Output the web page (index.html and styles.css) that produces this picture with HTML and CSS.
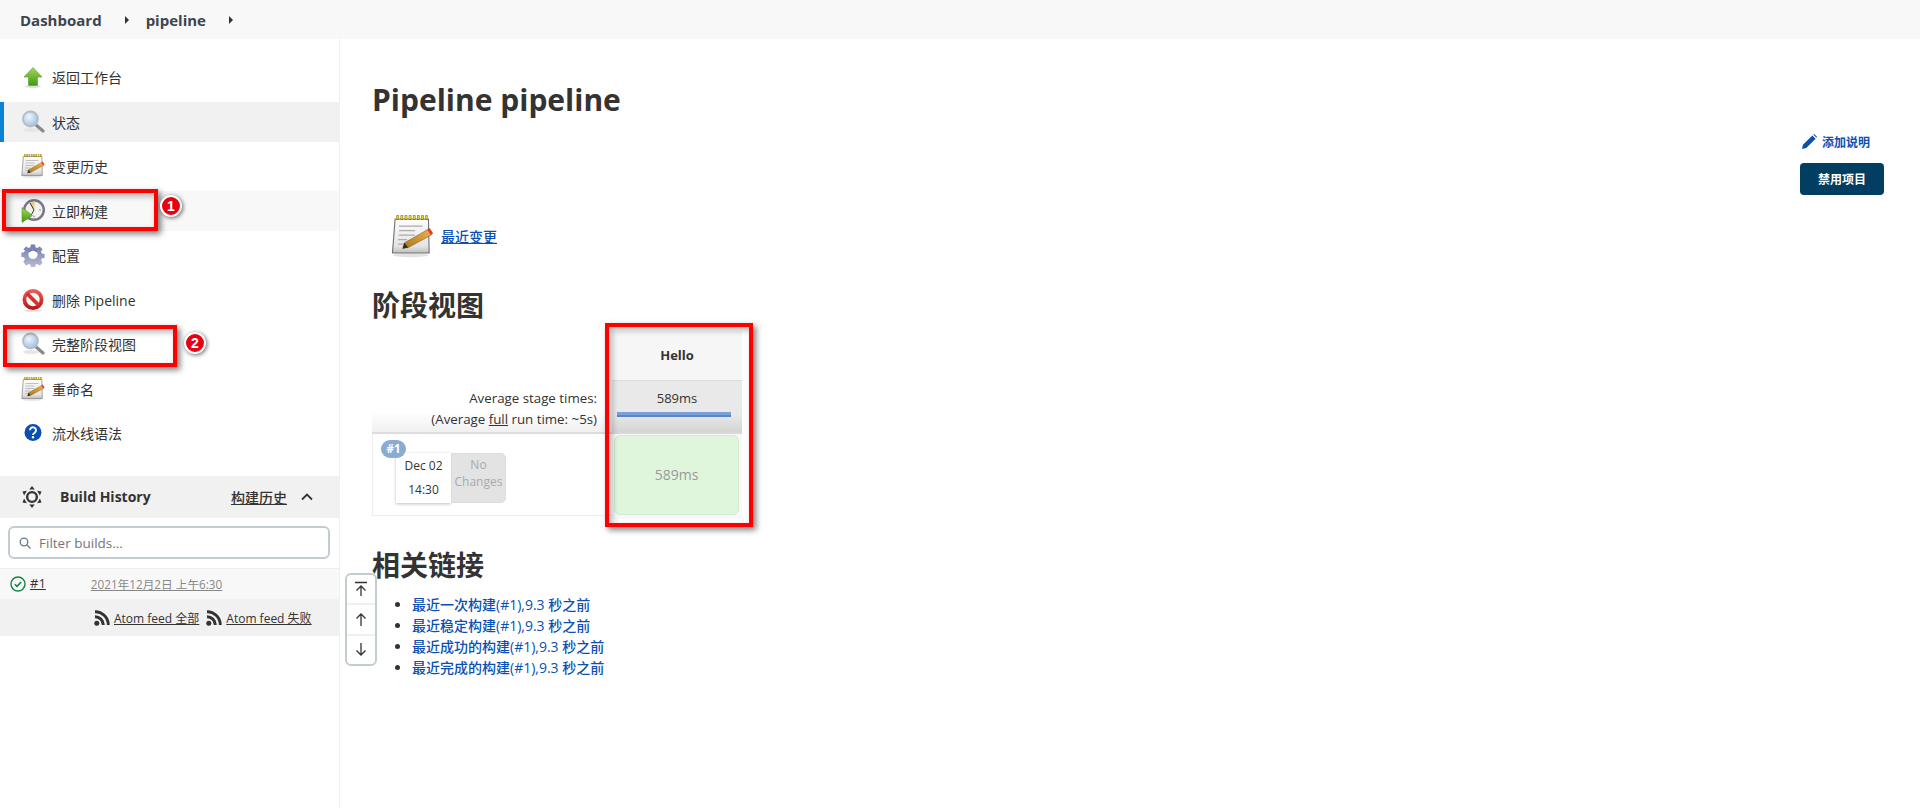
FILE: index.html
```html
<!DOCTYPE html>
<html lang="zh-CN">
<head>
<meta charset="utf-8">
<title>pipeline</title>
<link rel="stylesheet" href="styles.css">
</head>
<body>
<svg class="sprite" aria-hidden="true">
  <defs>
    <linearGradient id="gGreen" x1="0" y1="0" x2="0" y2="1"><stop offset="0" stop-color="#a5d65c"/><stop offset="1" stop-color="#3f9a12"/></linearGradient>
    <radialGradient id="gLens" cx=".4" cy=".35" r=".8"><stop offset="0" stop-color="#eef6fd"/><stop offset="1" stop-color="#8fb4de"/></radialGradient>
    <linearGradient id="gPage" x1="0" y1="0" x2="0" y2="1"><stop offset="0" stop-color="#fdfdfd"/><stop offset=".8" stop-color="#e4e4e4"/><stop offset="1" stop-color="#bdbdbd"/></linearGradient>
    <linearGradient id="gPencil" x1="0" y1="1" x2="1" y2="0"><stop offset="0" stop-color="#a8741c"/><stop offset="1" stop-color="#eeb34c"/></linearGradient>
    <linearGradient id="gGear" x1="0" y1="0" x2="0" y2="1"><stop offset="0" stop-color="#6f7bb0"/><stop offset="1" stop-color="#bdbdd2"/></linearGradient>
    <linearGradient id="gRed" x1="0" y1="0" x2="0" y2="1"><stop offset="0" stop-color="#ea5a56"/><stop offset="1" stop-color="#b81a17"/></linearGradient>
    <symbol id="i-up" viewBox="0 0 24 24">
      <ellipse cx="12" cy="21.500" rx="8" ry="1.500" fill="#ddd"/>
      <path d="M12 2.500 21 12h-4.500v8.500h-9V12H3z" fill="url(#gGreen)" stroke="#5d9c2c" stroke-width=".6"/>
    </symbol>
    <symbol id="i-search" viewBox="0 0 24 24">
      <ellipse cx="10" cy="20" rx="8" ry="2" fill="#e6e6e6"/>
      <path d="m14.500 14.500 7.500 6.500" stroke="#8a8a8a" stroke-width="3.200" stroke-linecap="round"/>
      <circle cx="9.500" cy="9" r="7.500" fill="url(#gLens)" stroke="#b5bcc6" stroke-width="1.800"/>
    </symbol>
    <symbol id="i-note" viewBox="0 0 24 24">
      <ellipse cx="11" cy="22.800" rx="10" ry="1" fill="#e2e2e2"/>
      <path d="M2.300 2.500h18.600l.4 19H.8z" fill="url(#gPage)" stroke="#6e6e6e" stroke-width=".6"/>
      <path d="M3 1.700h17.500" stroke="#8e7a10" stroke-width="2.700" stroke-dasharray="1.500 .8"/>
      <path d="M3.300 1.700h17.500" stroke="#e8cf3a" stroke-width="1.700" stroke-dasharray=".9 1.400"/>
      <path d="M4.500 6.500h13M4.500 9h9M4.300 11.500h9M4 14h5M4 16.500h4" stroke="#ababab" stroke-width=".7"/>
      <path d="m6.500 19 1-3.200L20.500 8.400l2 3.100-12.800 6.900z" fill="url(#gPencil)" stroke="#7d5a18" stroke-width=".3"/>
      <path d="m20.300 8.500 1.300-.9 1.900 3-1.200.9z" fill="#e33"/>
      <path d="m6.500 19 1-3.200 2.100 2.600z" fill="#2c2c2c"/>
    </symbol>
    <symbol id="i-build" viewBox="0 0 24 24">
      <circle cx="13" cy="11" r="9.800" fill="#f3f1ea" stroke="#77748f" stroke-width="2.400"/>
      <path d="M13 11 8.500 3.500 14 2.500z" fill="#e5d283"/>
      <path d="M13 11 9 4M13 11l-2.500 4.500" stroke="#333" stroke-width="1"/>
      <circle cx="19" cy="11" r=".9" fill="#aaa"/>
      <circle cx="13" cy="17.500" r=".9" fill="#aaa"/>
      <path d="M1 8.500 11.500 16.500 1 23.500z" fill="url(#gGreen)" stroke="#3d8a12" stroke-width=".5"/>
    </symbol>
    <symbol id="i-gear" viewBox="0 0 24 24">
      <path d="M9.600 0h4.800l.7 3.400 2.200.9 2.900-1.900 3.400 3.400-1.900 2.900.9 2.200 3.400.7v4.800l-3.400.7-.9 2.200 1.900 2.900-3.400 3.400-2.900-1.900-2.200.9-.7 3.400H9.600l-.7-3.400-2.200-.9-2.900 1.900L.4 20.800l1.900-2.900-.9-2.200-3.400-.7v-4.800l3.400-.7.9-2.200L.4 5.800l3.400-3.400 2.900 1.900 2.200-.9z" transform="translate(2 1.400) scale(.83)" fill="url(#gGear)"/>
      <circle cx="12" cy="11.400" r="4.600" fill="#fff"/>
      <path d="M8.300 9a4.500 4.500 0 0 1 7.400 0" stroke="#5c6590" stroke-width="1.100" fill="none"/>
    </symbol>
    <symbol id="i-no" viewBox="0 0 24 24">
      <ellipse cx="12" cy="22.600" rx="9" ry="1.200" fill="#ddd"/>
      <circle cx="12" cy="11.500" r="8.600" fill="#f6f6f6" stroke="url(#gRed)" stroke-width="3.800"/>
      <path d="m6 5.500 12 12" stroke="#d4322f" stroke-width="3.800"/>
    </symbol>
    <symbol id="i-help" viewBox="0 0 24 24">
      <circle cx="12" cy="11.500" r="8.500" fill="#0b4fb3"/>
      <path d="M9 9.200a3 3 0 1 1 4.700 2.500c-1.100.7-1.700 1.100-1.700 2.300" fill="none" stroke="#fff" stroke-width="1.900"/>
      <circle cx="12" cy="16.300" r="1.200" fill="#fff"/>
    </symbol>
    <symbol id="i-rss" viewBox="0 0 16 16">
      <circle cx="2.800" cy="13.200" r="2.500" fill="#333"/>
      <path d="M1 6.700A8.300 8.300 0 0 1 9.300 15M1 1.700A13.300 13.300 0 0 1 14.300 15" fill="none" stroke="#333" stroke-width="2.900"/>
    </symbol>
  </defs>
</svg>

<nav class="crumbs">
  <a class="crumb">Dashboard</a><span class="caret"></span>
  <a class="crumb">pipeline</a><span class="caret"></span>
</nav>

<div class="page">
  <aside class="side">
    <ul class="tasks">
      <li class="task"><svg class="ti"><use href="#i-up"/></svg>返回工作台</li>
      <li class="task task-active"><svg class="ti"><use href="#i-search"/></svg>状态</li>
      <li class="task"><svg class="ti"><use href="#i-note"/></svg>变更历史</li>
      <li class="task task-hover"><svg class="ti"><use href="#i-build"/></svg>立即构建</li>
      <li class="task"><svg class="ti"><use href="#i-gear"/></svg>配置</li>
      <li class="task"><svg class="ti"><use href="#i-no"/></svg>删除 Pipeline</li>
      <li class="task"><svg class="ti"><use href="#i-search"/></svg>完整阶段视图</li>
      <li class="task"><svg class="ti"><use href="#i-note"/></svg>重命名</li>
      <li class="task"><svg class="ti"><use href="#i-help"/></svg>流水线语法</li>
    </ul>

    <section class="history">
      <header class="hist-head">
        <svg class="hist-icon" viewBox="0 0 24 24">
          <circle cx="12" cy="12" r="5.300" fill="none" stroke="#333" stroke-width="2.600"/>
          <path d="M12 0l3 3.800H9z" fill="#333"/>
          <path d="M12 0l3 3.800H9z" fill="#333" transform="rotate(60 12 12)"/>
          <path d="M12 0l3 3.800H9z" fill="#333" transform="rotate(120 12 12)"/>
          <path d="M12 0l3 3.800H9z" fill="#333" transform="rotate(180 12 12)"/>
          <path d="M12 0l3 3.800H9z" fill="#333" transform="rotate(240 12 12)"/>
          <path d="M12 0l3 3.800H9z" fill="#333" transform="rotate(300 12 12)"/>
        </svg>
        <b class="hist-title">Build History</b>
        <a class="hist-link">构建历史</a>
        <svg class="hist-chev" viewBox="0 0 12 8"><path d="M1 6.500 6 1.500l5 5" fill="none" stroke="#333" stroke-width="1.800"/></svg>
      </header>
      <div class="filter">
        <svg class="filter-icon" viewBox="0 0 12 12"><circle cx="5" cy="5" r="3.800" fill="none" stroke="#5f7d95" stroke-width="1.300"/><path d="m8 8 3.500 3.500" stroke="#5f7d95" stroke-width="1.300"/></svg>
        <span class="filter-text">Filter builds...</span>
      </div>
      <div class="build">
        <svg class="build-ok" viewBox="0 0 16 16"><circle cx="8" cy="8" r="7" fill="none" stroke="#138347" stroke-width="1.400"/><path d="m4.800 8.200 2.200 2.200 4.200-4.400" fill="none" stroke="#138347" stroke-width="1.600"/></svg>
        <a class="build-num">#1</a>
        <a class="build-date">2021年12月2日 上午6:30</a>
      </div>
      <div class="feeds">
        <svg class="rss"><use href="#i-rss"/></svg><a class="feed">Atom feed 全部</a>
        <svg class="rss rss-2"><use href="#i-rss"/></svg><a class="feed">Atom feed 失败</a>
      </div>
    </section>
  </aside>

  <main class="main">
    <h1 class="title">Pipeline pipeline</h1>
    <div class="actions">
      <a class="add-desc">
        <svg class="pen" viewBox="0 0 16 16"><path d="M0 16l1-4.500L11 1.500l3.500 3.500-10 10zM12 .5l1-.5 3 3-.5 1z" fill="#0b4fb3"/></svg>添加说明
      </a>
      <button class="disable">禁用项目</button>
    </div>
    <div class="changes">
      <svg class="note-big"><use href="#i-note"/></svg>
      <a class="link">最近变更</a>
    </div>
    <h2 class="sec sec-stage">阶段视图</h2>

    <div class="stage">
      <div class="st-blank"></div>
      <div class="st-head">Hello</div>
      <div class="st-labels">
        <div>Average stage times:</div>
        <div>(Average <u>full</u> run time: ~5s)</div>
      </div>
      <div class="st-avg">
        <div class="st-avg-t">589ms</div>
        <div class="st-bar"></div>
      </div>
      <div class="st-run">
        <span class="run-badge">#1</span>
        <div class="run-date"><div>Dec 02</div><div>14:30</div></div>
        <div class="run-nochg">No<br>Changes</div>
      </div>
      <div class="st-cellwrap"><div class="st-cell">589ms</div></div>
    </div>

    <h2 class="sec sec-links">相关链接</h2>
    <ul class="links">
      <li><a class="link">最近一次构建(#1),9.3 秒之前</a></li>
      <li><a class="link">最近稳定构建(#1),9.3 秒之前</a></li>
      <li><a class="link">最近成功的构建(#1),9.3 秒之前</a></li>
      <li><a class="link">最近完成的构建(#1),9.3 秒之前</a></li>
    </ul>
  </main>
</div>

<div class="scroller">
  <div class="sc-btn"><svg class="sc-i" viewBox="0 0 16 16"><path d="M2 1.500h12M8 15V5M3.500 9.500 8 5l4.500 4.500" fill="none" stroke="#333" stroke-width="1.300"/></svg></div>
  <div class="sc-btn"><svg class="sc-i" viewBox="0 0 16 16"><path d="M8 15V3M3.500 7.500 8 3l4.500 4.500" fill="none" stroke="#333" stroke-width="1.300"/></svg></div>
  <div class="sc-btn"><svg class="sc-i" viewBox="0 0 16 16"><path d="M8 1v12M3.500 8.500 8 13l4.500-4.500" fill="none" stroke="#333" stroke-width="1.300"/></svg></div>
</div>

<div class="mark mark-a"></div>
<div class="mark mark-b"></div>
<div class="mark mark-c"></div>
<div class="pin pin-a">1</div>
<div class="pin pin-b">2</div>
</body>
</html>
```
FILE: styles.css
```css
* { box-sizing: border-box; }
html, body { margin: 0; height: 100%; }
body {
  font-family: "Open Sans", "Noto Sans CJK SC", sans-serif;
  font-size: 14px;
  color: #333;
  background: #fff;
  position: relative;
  height: 808px;
  overflow: hidden;
}
ul { list-style: none; margin: 0; padding: 0; }
.sprite { position: absolute; width: 0; height: 0; }

.crumbs {
  height: 39px;
  background: #f8f8f8;
  display: flex;
  align-items: center;
  padding-left: 20px;
}
.crumb { font-weight: 700; font-size: 15px; color: #3d4450; }
.caret {
  width: 0; height: 0;
  border-left: 4px solid #333;
  border-top: 4px solid transparent;
  border-bottom: 4px solid transparent;
  margin: 0 17px 0 23px;
}

.page { display: flex; height: 769px; }
.side { width: 340px; flex: none; border-right: 1px solid #f0f0f0; padding-top: 18px; }
.tasks { display: flex; flex-direction: column; gap: 4.500px; }
.task {
  height: 40px;
  display: flex;
  align-items: center;
  gap: 7px;
  padding-left: 21px;
  font-size: 14px;
}
.ti { width: 24px; height: 24px; flex: none; }
.task-active { background: #f1f1f1; box-shadow: inset 4px 0 0 #0a83d6; }
.task-hover { background: #f8f8f8; }

.history { margin-top: 23px; }
.hist-head {
  height: 42px;
  background: #f1f1f1;
  display: flex;
  align-items: center;
  padding: 0 26px 1px 21px;
}
.hist-icon { width: 22px; height: 24px; }
.hist-title { margin-left: 17px; font-size: 14px; font-weight: 700; }
.hist-link { margin-left: auto; font-size: 14px; font-weight: 500; text-decoration: underline; }
.hist-chev { width: 12px; height: 8px; margin-left: 14px; }

.filter {
  margin: 8px 9px 9px 8px;
  height: 33px;
  border: 2px solid #c3ccd1;
  border-radius: 6px;
  display: flex;
  align-items: center;
  padding-left: 9px;
  gap: 8px;
}
.filter-icon { width: 12px; height: 12px; }
.filter-text { font-size: 13.500px; color: #757575; }

.build {
  height: 31px;
  background: #f8f8f8;
  border-top: 1px solid #eee;
  display: flex;
  align-items: center;
  padding: 0 0 2px 10px;
}
.build-ok { width: 16px; height: 16px; margin-top: 2px; }
.build-num { margin-left: 4px; font-size: 13px; text-decoration: underline; }
.build-date { margin-left: 45px; font-size: 11.700px; color: #888; text-decoration: underline; }
.feeds {
  height: 37px;
  background: #f1f1f1;
  display: flex;
  align-items: center;
  padding-left: 94px;
}
.rss { width: 16px; height: 16px; margin-right: 4px; }
.rss-2 { margin-left: 7px; }
.feed { font-size: 12px; text-decoration: underline; }

.main { flex: 1; padding: 0 36px 0 32px; min-width: 0; }
.title { margin: 41px 0 0; font-size: 30px; line-height: 40px; font-weight: 700; color: #333; }
.actions { display: flex; flex-direction: column; align-items: flex-start; width: 84px; margin: 12px 0 0 auto; }
.add-desc {
  display: flex; align-items: center; gap: 5px;
  height: 19px; padding-left: 2px;
  font-size: 12px; font-weight: 700; color: #0b4fb3;
}
.pen { width: 15px; height: 15px; }
.disable {
  margin-top: 12px;
  width: 84px; height: 32px;
  border: 0; border-radius: 4px;
  background: #023e62; color: #fff;
  font: 700 12px "Open Sans", "Noto Sans CJK SC", sans-serif;
}
.changes { display: flex; align-items: center; gap: 7px; margin: 18px 0 0 19px; height: 46px; }
.note-big { width: 43px; height: 46px; }
.link { color: #0b4fb3; font-size: 14px; font-weight: 500; text-decoration: none; }
.changes .link { text-decoration: underline; }

.sec { margin: 0; font-size: 28px; line-height: 36px; font-weight: 700; }
.sec-stage { margin-top: 28px; }

.stage {
  display: grid;
  grid-template-columns: 240px 130px;
  grid-template-rows: 50px 53px 85px;
  margin: 8px 0 0;
  width: 370px;
}
.st-head { background: #f6f6f6; display: flex; align-items: center; justify-content: center; font-weight: 700; font-size: 13px; border-bottom: 1px solid #ddd; padding-bottom: 2px; }
.st-labels {
  text-align: right;
  padding: 7px 15px 0 0;
  font-size: 13.300px;
  line-height: 21px;
  background: linear-gradient(#fff 60%, #f0f0f0);
  border-bottom: 2px solid #ddd;
}
.st-labels u { text-decoration: underline; }
.st-avg { background: linear-gradient(#e9e9e9 65%, #d4d4d4); padding-top: 7px; border-bottom: 2px solid #d8d8d8; }
.st-avg-t { text-align: center; font-size: 13px; line-height: 21px; }
.st-bar { height: 5px; margin: 3px 11px 0 5px; background: #7ba0d8; border-bottom: 2px solid #5b86c6; }
.st-run { position: relative; border-left: 1px solid #eee; border-bottom: 1px solid #eee; height: 82px; display: flex; align-items: flex-start; padding: 19px 0 0 23px; }
.run-badge {
  position: absolute; left: 8px; top: 6px;
  width: 25px; height: 18px; border-radius: 9px;
  background: #8aacd3; color: #fff;
  font-size: 11.500px; font-weight: 700; line-height: 18px; text-align: center;
}
.run-date {
  width: 55px; height: 50px;
  background: #fff;
  box-shadow: 0 1px 3px rgba(0,0,0,.25);
  font-size: 12px;
  line-height: 24px;
  text-align: center;
  padding-top: 1px;
}
.run-nochg {
  width: 55px; height: 50px;
  background: #e3e3e3;
  border-radius: 0 5px 5px 0;
  border: 1px solid #ddd;
  color: #aaa;
  font-size: 12px;
  line-height: 17px;
  text-align: center;
  padding-top: 2px;
}
.st-cellwrap { padding: 1px 3px 4px 2px; background: #f8f8f8; }
.st-cell {
  height: 80px;
  background: #dff6dd;
  border: 1px solid #d5e8d3;
  border-radius: 6px;
  display: flex; align-items: center; justify-content: center;
  font-size: 14px; color: #999;
  padding-bottom: 2px;
}

.sec-links { margin-top: 28px; }
.links { list-style: disc; padding-left: 40px; margin-top: 11px; }
.links li { line-height: 21px; color: #333; }

.scroller {
  position: absolute; left: 345px; top: 573px;
  width: 32px; height: 93px;
  background: #fff;
  border: 2px solid #c3ccd1;
  border-radius: 6px;
  display: flex; flex-direction: column;
}
.sc-btn { flex: 1; display: flex; align-items: center; justify-content: center; border-bottom: 2px solid #f0f0f0; }
.sc-btn:last-child { border-bottom: 0; }
.sc-i { width: 16px; height: 16px; }

.mark {
  position: absolute;
  border: 4px solid #f00;
  box-shadow: 3px 3px 6px rgba(0,0,0,.5), inset 3px 3px 6px rgba(0,0,0,.3);
}
.mark-a { left: 2px; top: 189px; width: 156px; height: 42px; }
.mark-b { left: 3px; top: 325px; width: 174px; height: 42px; }
.mark-c { left: 605px; top: 323px; width: 148px; height: 204px; }
.pin {
  position: absolute;
  width: 22px; height: 22px;
  border-radius: 50%;
  background: #e60012;
  border: 2px solid #fff;
  box-shadow: 1px 1px 4px rgba(0,0,0,.6);
  color: #fff;
  font: 700 14px/18px "Liberation Sans", sans-serif;
  text-align: center;
}
.pin-a { left: 160px; top: 195px; }
.pin-b { left: 184px; top: 332px; }
```
